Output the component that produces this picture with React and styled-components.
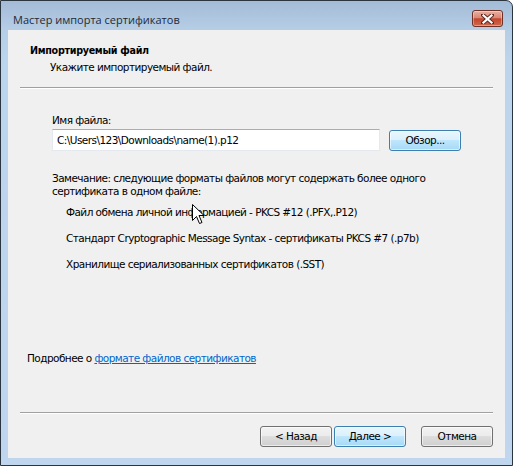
import React from 'react'
import styled, { createGlobalStyle } from 'styled-components'

const GlobalStyle = createGlobalStyle`
  html, body {
    margin: 0;
    padding: 0;
    background: #ffffff;
  }
  body {
    width: 513px;
    height: 466px;
    overflow: hidden;
  }
`

const formats = [
  'Файл обмена личной информацией - PKCS #12 (.PFX,.P12)',
  'Стандарт Cryptographic Message Syntax - сертификаты PKCS #7 (.p7b)',
  'Хранилище сериализованных сертификатов (.SST)',
]

export default function App() {
  return (
    <>
      <GlobalStyle />
      <Window>
        <TitleBar>
          <Caption>Мастер импорта сертификатов</Caption>
          <CloseButton>
            <svg width="13" height="10" viewBox="0 0 13 10">
              <path d="M2 1 L11 9 M11 1 L2 9" stroke="#5a2a22" strokeWidth="4" strokeLinecap="square" />
              <path d="M2.5 1.5 L10.5 8.5 M10.5 1.5 L2.5 8.5" stroke="#ffffff" strokeWidth="2.2" strokeLinecap="square" />
            </svg>
          </CloseButton>
        </TitleBar>
        <Client>
          <Header>
            <HeaderTitle>Импортируемый файл</HeaderTitle>
            <HeaderText>Укажите импортируемый файл.</HeaderText>
          </Header>
          <Separator />
          <Main>
            <Label>Имя файла:</Label>
            <FileRow>
              <FileInput type="text" readOnly value="C:\Users\123\Downloads\name(1).p12" />
              <Button $primary>Обзор...</Button>
            </FileRow>
            <Note>
              Замечание: следующие форматы файлов могут содержать более одного
              <br />
              сертификата в одном файле:
            </Note>
            <FormatList>
              {formats.map((f) => (
                <FormatItem key={f}>{f}</FormatItem>
              ))}
            </FormatList>
          </Main>
          <MoreInfo>
            Подробнее о <Link href="#">формате файлов сертификатов</Link>
          </MoreInfo>
          <Spacer />
          <Separator />
          <Footer>
            <Button>&lt; Назад</Button>
            <Button $primary>Далее &gt;</Button>
            <Button $gap>Отмена</Button>
          </Footer>
        </Client>
        <Cursor width="13" height="21" viewBox="0 0 13 21">
          <path d="M0.5 0.5 L0.5 16.5 L4.5 12.5 L7.5 19.5 L10 18.5 L7 11.5 L12 11.5 Z" fill="#ffffff" stroke="#000000" strokeWidth="1" strokeLinejoin="miter" />
        </Cursor>
      </Window>
    </>
  )
}

const Window = styled.div`
  position: relative;
  width: 513px;
  height: 466px;
  box-sizing: border-box;
  display: flex;
  flex-direction: column;
  padding: 0 7px 7px 7px;
  border: 1px solid #2b3540;
  border-radius: 0 7px 0 0;
  background: linear-gradient(to bottom, #a3bbd6 0px, #b6cde6 28px, #bcd4ec 60px, #bfd6ee 100%);
  font-family: "DejaVu Sans", Tahoma, sans-serif;
  font-size: 10.5px;
  letter-spacing: -0.55px;
  color: #000000;
`

const TitleBar = styled.div`
  height: 29px;
  display: flex;
  align-items: flex-start;
  justify-content: space-between;
`

const Caption = styled.div`
  margin: 11px 0 0 5px;
  font-family: "Open Sans", "Noto Sans", sans-serif;
  font-size: 11px;
  letter-spacing: 0;
  line-height: 16px;
  color: #1e2a36;
`

const CloseButton = styled.div`
  margin: 9px 2px 0 0;
  width: 31px;
  height: 17px;
  box-sizing: border-box;
  display: flex;
  align-items: center;
  justify-content: center;
  border: 1px solid #6f3025;
  border-radius: 3px;
  background: linear-gradient(to bottom, #e9b0a3 0%, #d98873 45%, #c4452d 52%, #cd6a4c 100%);
  box-shadow: inset 0 0 0 1px rgba(255, 255, 255, 0.35);
`

const Client = styled.div`
  flex: 1;
  display: flex;
  flex-direction: column;
  background: #f0f0f0;
  line-height: 13px;
`

const Header = styled.div`
  padding: 14px 0 13px 22px;
`

const HeaderTitle = styled.div`
  font-size: 9.6px;
  font-weight: bold;
  letter-spacing: -0.3px;
`

const HeaderText = styled.div`
  margin-top: 4px;
  padding-left: 20px;
`

const Separator = styled.div`
  margin: 0 12px;
  height: 1px;
  background: #a0a0a0;
  border-bottom: 1px solid #ffffff;
`

const Main = styled.div`
  padding: 25px 0 0 44px;
`

const Label = styled.div``

const FileRow = styled.div`
  margin-top: 2px;
  display: flex;
  align-items: center;
  gap: 9px;
`

const FileInput = styled.input`
  width: 328px;
  height: 22px;
  box-sizing: border-box;
  margin: 0;
  padding: 0 4px;
  border: 1px solid #e3e9ef;
  border-top-color: #abadb3;
  background: #ffffff;
  font: inherit;
  letter-spacing: inherit;
  color: #000000;
  outline: none;
`

const Button = styled.button`
  width: 72px;
  height: 21px;
  margin: 0 0 0 ${(p) => (p.$gap ? '13px' : '0')};
  padding: 0;
  box-sizing: border-box;
  border: 1px solid ${(p) => (p.$primary ? '#3c7fb1' : '#707070')};
  border-radius: 3px;
  background: ${(p) =>
    p.$primary
      ? 'linear-gradient(to bottom, #eaf6fd 0%, #d9f0fc 50%, #bee6fd 50%, #a7d9f5 100%)'
      : 'linear-gradient(to bottom, #f2f2f2 0%, #ebebeb 50%, #dddddd 50%, #cfcfcf 100%)'};
  box-shadow: inset 0 0 0 1px rgba(255, 255, 255, 0.6);
  font: inherit;
  letter-spacing: inherit;
  color: #000000;
`

const Note = styled.div`
  margin-top: 21px;
`

const FormatList = styled.div`
  margin-top: 8px;
  padding-left: 14px;
  display: flex;
  flex-direction: column;
  gap: 13px;
`

const FormatItem = styled.div``

const MoreInfo = styled.div`
  margin-top: 81px;
  padding-left: 19px;
`

const Link = styled.a`
  color: #0066cc;
  text-decoration: underline;
`

const Spacer = styled.div`
  flex: 1;
`

const Footer = styled.div`
  display: flex;
  justify-content: flex-end;
  gap: 2px;
  padding: 12px 12px 11px 0;
`

const Cursor = styled.svg`
  position: absolute;
  left: 191px;
  top: 203px;
`
